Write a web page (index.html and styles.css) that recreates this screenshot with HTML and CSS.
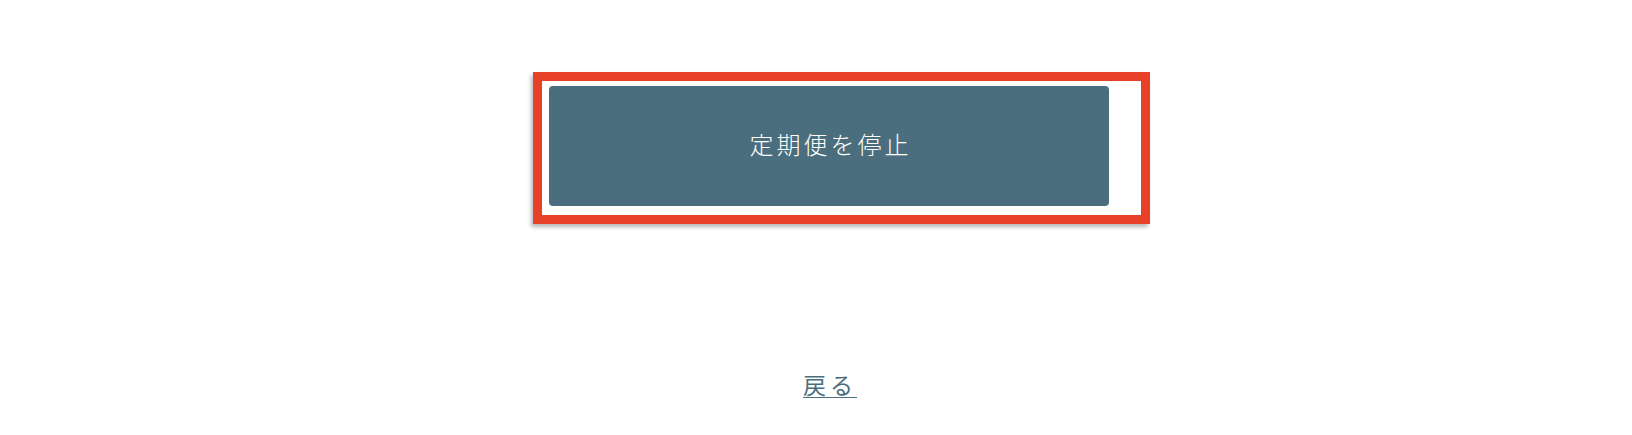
FILE: index.html
```html
<!DOCTYPE html>
<html lang="ja">
<head>
<meta charset="utf-8">
<link rel="stylesheet" href="styles.css">
</head>
<body>
<main class="page">
  <div class="frame-row">
    <div class="frame">
      <button class="stop-btn">定期便を停止</button>
    </div>
  </div>
  <div class="back-row">
    <a class="back-link" href="#">戻る</a>
  </div>
</main>
</body>
</html>
```

FILE: styles.css
```css
html, body {
  margin: 0;
  padding: 0;
  background: #ffffff;
}
body {
  width: 1632px;
  height: 435px;
  overflow: hidden;
  font-family: "Noto Sans CJK JP", "Noto Sans", sans-serif;
}
.page {
  padding-top: 72px;
}
.frame-row {
  display: flex;
  padding-left: 533px;
}
.frame {
  border: 9px solid #e8412a;
  padding: 5px 32px 9px 7px;
  box-shadow: -2px 3px 4px rgba(0, 0, 0, 0.28);
  background: #ffffff;
  display: flex;
}
.stop-btn {
  width: 560px;
  height: 120px;
  background: #4a6e7e;
  border: none;
  border-radius: 4px;
  color: #ffffff;
  font-family: "Noto Sans CJK JP", "Noto Sans", sans-serif;
  font-size: 24px;
  font-weight: 300;
  letter-spacing: 3px;
  padding: 0 0 5px 3px;
  margin: 0;
}
.back-row {
  display: flex;
  justify-content: center;
  padding-left: 28px;
  margin-top: 145px;
}
.back-link {
  color: #4a6e7e;
  font-size: 23px;
  letter-spacing: 4px;
  line-height: 30px;
  text-decoration: underline;
  text-underline-offset: 3px;
  text-decoration-thickness: 1px;
  font-weight: 400;
}
```
